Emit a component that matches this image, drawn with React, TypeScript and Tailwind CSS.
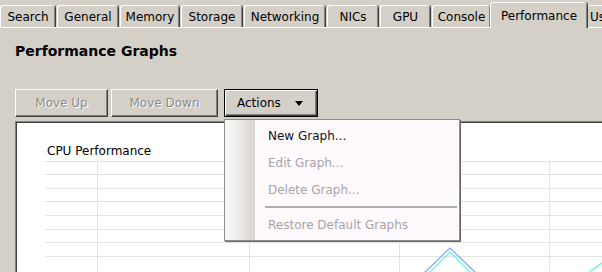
import { Fragment } from 'react';

const tabs = [
  { label: 'Search', width: 55 },
  { label: 'General', width: 61 },
  { label: 'Memory', width: 59 },
  { label: 'Storage', width: 61 },
  { label: 'Networking', width: 81 },
  { label: 'NICs', width: 51 },
  { label: 'GPU', width: 50 },
  { label: 'Console', width: 58 },
  { label: 'Performance', width: 97, active: true },
  { label: 'Users', width: 50, clipped: true },
];

const menuItems = [
  { label: 'New Graph...', enabled: true },
  { label: 'Edit Graph...', enabled: false },
  { label: 'Delete Graph...', enabled: false },
  { label: '-', enabled: false },
  { label: 'Restore Default Graphs', enabled: false },
];

const rows = [0, 13, 27, 40, 54, 68, 81, 95];
const cols = [52, 204, 354, 504];

function Tab({ label, width, active, clipped }: { label: string; width: number; active?: boolean; clipped?: boolean }) {
  if (active) {
    return (
      <div
        style={{ width }}
        className="relative z-10 -mb-px -mx-[2px] flex h-[26px] shrink-0 items-start justify-center rounded-t-[3px] border-l border-t border-white bg-[#d4d0c8] pt-[4px] shadow-[inset_-1px_0_#808080,1px_0_#404040]"
      >
        {label}
      </div>
    );
  }
  return (
    <div
      style={{ width }}
      className={
        clipped
          ? 'flex h-[22px] shrink-0 items-center justify-start rounded-t-[3px] border-l border-t border-white pl-[2px] pt-px'
          : 'flex h-[22px] shrink-0 items-center justify-center rounded-t-[3px] border-l border-t border-white pt-px shadow-[inset_-1px_0_#808080,1px_0_#404040]'
      }
    >
      {label}
    </div>
  );
}

function Button({ label, width }: { label: string; width: number }) {
  // disabled toolbar button, embossed grey text
  return (
    <div
      style={{ width }}
      className="flex h-[28px] shrink-0 items-center justify-center border border-b-[#404040] border-l-white border-r-[#404040] border-t-white shadow-[inset_-1px_-1px_#808080] text-[#8c8c8c] [text-shadow:1px_1px_0_#fff]"
    >
      {label}
    </div>
  );
}

export default function App() {
  return (
    <div className="relative h-[272px] w-[602px] overflow-hidden bg-[#d4d0c8] font-['DejaVu_Sans',sans-serif] text-[12px] text-black">
      <div className="flex h-[28px] items-end gap-[2px] border-b border-white">
        {tabs.map((t) => (
          <Fragment key={t.label}>
            <Tab label={t.label} width={t.width} active={t.active} clipped={t.clipped} />
          </Fragment>
        ))}
      </div>

      <div className="ml-[15px] mt-[15px] text-[14px] font-bold leading-[17px]">Performance Graphs</div>

      <div className="ml-[15px] mt-[29px] flex items-center">
        <Button label="Move Up" width={93} />
        <div className="w-[3px]" />
        <Button label="Move Down" width={107} />
        <div className="w-[6px]" />
        <div className="flex h-[28px] w-[94px] items-center justify-between border border-black pl-[12px] pr-[14px] shadow-[inset_1px_1px_#fff,inset_-1px_-1px_#404040,inset_-2px_-2px_#808080]">
          <span>Actions</span>
          <svg width="8" height="5" viewBox="0 0 8 5">
            <path d="M0 0h8L4 5z" fill="#000" />
          </svg>
        </div>
      </div>

      <div className="ml-[15px] mt-[4px] h-[200px] border-l border-t border-[#808080] bg-white shadow-[inset_1px_1px_#404040]">
        <div className="pl-[31px] pt-[22px] leading-[15px]">CPU Performance</div>
        <svg className="ml-[29px] mt-[2px] block" width="570" height="115">
          {rows.map((y) => (
            <line key={y} x1="0" x2="570" y1={y + 0.5} y2={y + 0.5} stroke="#e3e3e3" />
          ))}
          {cols.map((x) => (
            <line key={x} x1={x + 0.5} x2={x + 0.5} y1="0" y2="115" stroke="#e3e3e3" />
          ))}
          <polyline points="381,115 405,91 429,115" fill="none" stroke="#66f0dc" strokeWidth="1.2" />
          <polyline points="378,113 405,87 432,113" fill="none" stroke="#7aa2ff" strokeWidth="1.2" />
          <polyline points="540,114 560,100" fill="none" stroke="#66f0dc" strokeWidth="1.2" />
        </svg>
      </div>

      <div className="absolute left-[224px] top-[119px] flex h-[122px] w-[236px] border border-[#8c8c8c] bg-[#fef9fd] shadow-[1px_1px_0_#6a6a6a]">
        <div className="w-[30px] shrink-0 bg-gradient-to-r from-[#fbf9f9] via-[#eceae7] to-[#d6d2cc]" />
        <div className="flex flex-1 flex-col pt-[2px]">
          {menuItems.map((m, i) =>
            m.label === '-' ? (
              <div key={i} className="flex h-[8px] items-center pl-[10px] pr-[2px]">
                <div className="h-[2px] w-full bg-[#b0adad]" />
              </div>
            ) : (
              <div
                key={i}
                className={
                  m.enabled
                    ? 'flex h-[27px] items-center pl-[13px] text-[#111]'
                    : 'flex h-[27px] items-center pl-[13px] text-[#a6a4a8]'
                }
              >
                {m.label}
              </div>
            ),
          )}
        </div>
      </div>
    </div>
  );
}
